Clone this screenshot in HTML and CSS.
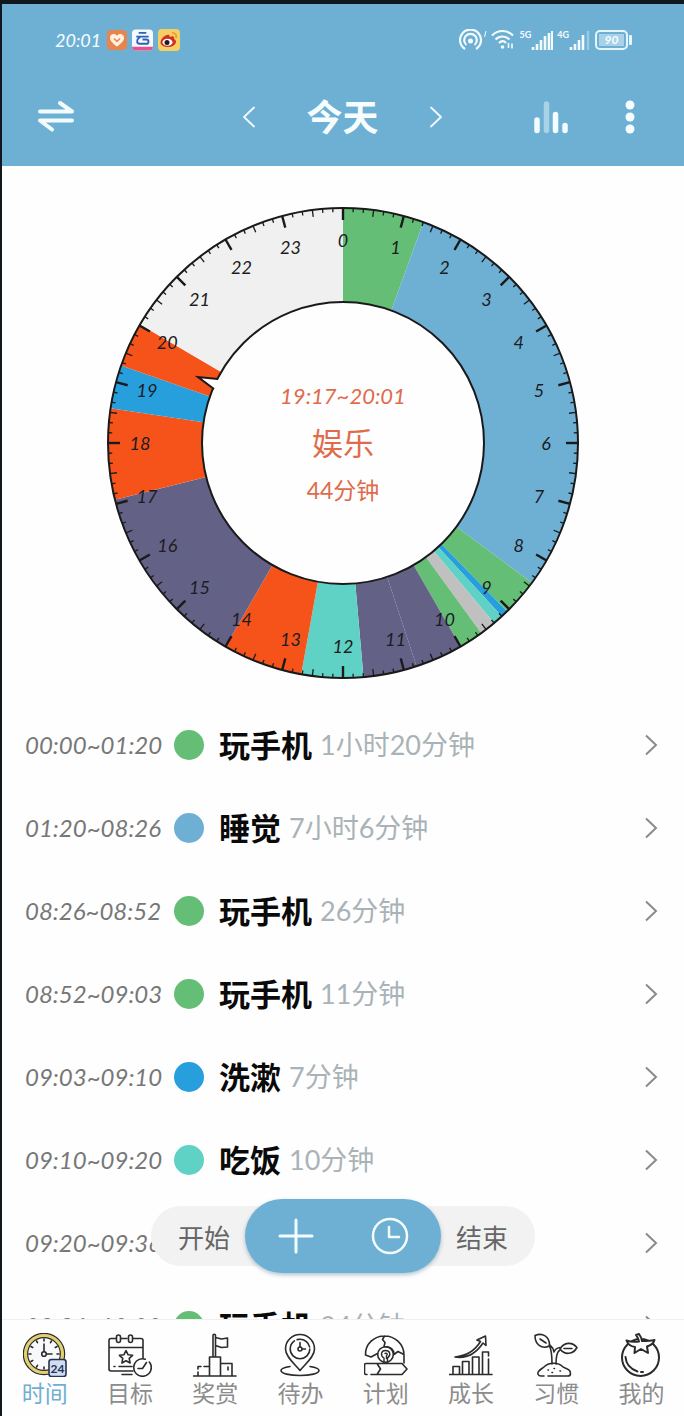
FILE: index.html
```html
<!DOCTYPE html>
<html lang="zh-CN">
<head>
    <meta charset="UTF-8">
    <meta name="viewport" content="width=device-width, initial-scale=1.0">
    <title>今天</title>
    <link rel="stylesheet" href="styles.css">
</head>
<body>
    <div class="app">
        <header class="header">
            <div class="status-bar">
                <span class="status-time">20:01</span>
                <div class="status-apps">
                    <svg width="20" height="20" viewBox="0 0 20 20">
                        <rect width="20" height="20" rx="4" fill="#e8854f"/>
                        <path d="M10 16.500C5 13 3 10.500 3 7.800 3 3.500 8.300 3 10 6c1.700-3 7-2.500 7 1.800 0 2.700-2 5.200-7 8.700z" fill="#fff3df"/>
                        <path d="M7 8.500l3 3 3-3" fill="none" stroke="#e8854f" stroke-width="1.500"/>
                    </svg>
                    <svg width="21" height="22" viewBox="0 0 22 22">
                        <rect width="22" height="22" rx="4" fill="#f4f9ff"/>
                        <path d="M0 18h22a4 4 0 0 1-4 4H4a4 4 0 0 1-4-4z" fill="#e2558c"/>
                        <path d="M7 3.500h8M4.500 7.500h13M8.500 7.500C4 11 5 15 8 15h7c3 0 3-4.500 0-4.500h-4" fill="none" stroke="#2d62b4" stroke-width="2"/>
                    </svg>
                    <svg width="22" height="22" viewBox="0 0 22 22">
                        <rect width="22" height="22" rx="4" fill="#f6cf62"/>
                        <path d="M2.500 13.500c0-4 6-9 8.500-7.500 1 .6.500 2 .5 2 3-1.500 5.500-.5 4.500 2 4 1.500 2 8-6 8-4 0-7.500-2-7.500-4.500z" fill="#d52f25"/>
                        <ellipse cx="9.500" cy="13.300" rx="5" ry="3.500" fill="#fff"/>
                        <circle cx="9" cy="13.500" r="2.500" fill="#1d1d1d"/>
                        <path d="M14 4c3-.5 5 2 4 5" fill="none" stroke="#f09a3a" stroke-width="1.800"/>
                    </svg>
                </div>
                <div class="status-signals">
                    <svg width="28" height="22" viewBox="0 0 28 22" class="line">
                        <path d="M6 20a10.500 10.500 0 1 1 11 0M7.500 16a6.300 6.300 0 1 1 8 0" stroke-width="2.200"/>
                        <circle cx="11.500" cy="12" r="2.500" class="solid"/>
                        <path d="M27 2l-1.500 6" stroke-width="1"/>
                    </svg>
                    <svg width="24" height="22" viewBox="0 0 24 22" class="line">
                        <path d="M1 6.500C7 .5 16 .5 22 6.500M4.500 10.500c4-4 10-4 14 0M8 14c2.500-2.500 5-2.500 7 0" stroke-width="2.200"/>
                        <circle cx="11.500" cy="18" r="1.800" class="solid"/>
                        <path d="M17.500 14v5M21 14.500v5" stroke-width="1.600"/>
                    </svg>
                    <div class="signal">
                        <span>5G</span>
                        <svg width="22" height="20" viewBox="0 0 22 20" class="line">
                            <path d="M2 17v3M6 14v6M10 10v10M14 6v14M18 3v17" stroke-width="2.600"/>
                            <path d="M21 1v19" stroke-width="2"/>
                        </svg>
                    </div>
                    <div class="signal">
                        <span>4G</span>
                        <svg width="22" height="20" viewBox="0 0 22 20" class="line">
                            <path d="M2 17v3M6 14v6M10 10v10M14 5v15" stroke-width="2.600"/>
                            <path d="M19 1v19" stroke-width="2.400" opacity=".35"/>
                        </svg>
                    </div>
                    <div class="battery"><span>90</span></div>
                </div>
            </div>

            <div class="toolbar">
                <button class="tool-button" aria-label="切换">
                    <svg width="38" height="34" viewBox="0 0 38 34" class="line">
                        <path d="M3 11.500h32L23 3M35 20.500H3L15 29.500" stroke-width="4"/>
                    </svg>
                </button>
                <div class="day-picker">
                    <button class="tool-button" aria-label="前一天">
                        <svg width="14" height="22" viewBox="0 0 14 22" class="line"><path d="M12 1.500L2 11l10 9.500" stroke-width="1.800"/></svg>
                    </button>
                    <h1>今天</h1>
                    <button class="tool-button" aria-label="后一天">
                        <svg width="14" height="22" viewBox="0 0 14 22" class="line"><path d="M2 1.500L12 11 2 20.500" stroke-width="1.800"/></svg>
                    </button>
                </div>
                <div class="tool-actions">
                    <button class="tool-button" aria-label="统计">
                        <svg width="34" height="34" viewBox="0 0 34 34" class="line">
                            <path d="M3 20v10.500M21.500 14.500v16M31 25.500v5" stroke-width="5.500"/>
                            <path d="M12.500 4v26.500" stroke-width="5.500" opacity=".45"/>
                        </svg>
                    </button>
                    <button class="tool-button" aria-label="更多">
                        <svg width="10" height="34" viewBox="0 0 10 34" class="solid">
                            <circle cx="5" cy="5" r="4.500"/><circle cx="5" cy="17" r="4.500"/><circle cx="5" cy="29" r="4.500"/>
                        </svg>
                    </button>
                </div>
            </div>
        </header>

        <main class="content">
            <div class="scroll">
                <div class="chart">
                    <svg id="dayChart" viewBox="-237 -237 474 474"></svg>
                    <div class="chart-info">
                        <span class="chart-range">19:17~20:01</span>
                        <span class="chart-name">娱乐</span>
                        <span class="chart-duration">44分钟</span>
                    </div>
                </div>

                <ul class="records">
                    <li><a href="#" class="record">
                        <span class="record-time">00:00~01:20</span><span class="dot green"></span>
                        <span class="record-name">玩手机</span><span class="record-duration">1小时20分钟</span>
                        <svg class="chevron" width="14" height="22" viewBox="0 0 14 22"><path d="M2 1.500L12 11 2 20.500"/></svg>
                    </a></li>
                    <li><a href="#" class="record">
                        <span class="record-time">01:20~08:26</span><span class="dot blue"></span>
                        <span class="record-name">睡觉</span><span class="record-duration">7小时6分钟</span>
                        <svg class="chevron" width="14" height="22" viewBox="0 0 14 22"><path d="M2 1.500L12 11 2 20.500"/></svg>
                    </a></li>
                    <li><a href="#" class="record">
                        <span class="record-time">08:26~08:52</span><span class="dot green"></span>
                        <span class="record-name">玩手机</span><span class="record-duration">26分钟</span>
                        <svg class="chevron" width="14" height="22" viewBox="0 0 14 22"><path d="M2 1.500L12 11 2 20.500"/></svg>
                    </a></li>
                    <li><a href="#" class="record">
                        <span class="record-time">08:52~09:03</span><span class="dot green"></span>
                        <span class="record-name">玩手机</span><span class="record-duration">11分钟</span>
                        <svg class="chevron" width="14" height="22" viewBox="0 0 14 22"><path d="M2 1.500L12 11 2 20.500"/></svg>
                    </a></li>
                    <li><a href="#" class="record">
                        <span class="record-time">09:03~09:10</span><span class="dot azure"></span>
                        <span class="record-name">洗漱</span><span class="record-duration">7分钟</span>
                        <svg class="chevron" width="14" height="22" viewBox="0 0 14 22"><path d="M2 1.500L12 11 2 20.500"/></svg>
                    </a></li>
                    <li><a href="#" class="record">
                        <span class="record-time">09:10~09:20</span><span class="dot teal"></span>
                        <span class="record-name">吃饭</span><span class="record-duration">10分钟</span>
                        <svg class="chevron" width="14" height="22" viewBox="0 0 14 22"><path d="M2 1.500L12 11 2 20.500"/></svg>
                    </a></li>
                    <li><a href="#" class="record">
                        <span class="record-time">09:20~09:36</span><span class="dot gray"></span>
                        <svg class="chevron" width="14" height="22" viewBox="0 0 14 22"><path d="M2 1.500L12 11 2 20.500"/></svg>
                    </a></li>
                    <li><a href="#" class="record">
                        <span class="record-time">09:36~10:00</span><span class="dot green"></span>
                        <span class="record-name">玩手机</span><span class="record-duration">24分钟</span>
                        <svg class="chevron" width="14" height="22" viewBox="0 0 14 22"><path d="M2 1.500L12 11 2 20.500"/></svg>
                    </a></li>
                </ul>
            </div>

            <div class="quick-bar">
                <button class="quick-text">开始</button>
                <div class="quick-main">
                    <button class="tool-button" aria-label="添加">
                        <svg width="36" height="36" viewBox="0 0 36 36" class="line"><path d="M18 2v32M2 18h32" stroke-width="3"/></svg>
                    </button>
                    <button class="tool-button" aria-label="计时">
                        <svg width="38" height="38" viewBox="0 0 38 38" class="line">
                            <circle cx="19" cy="19" r="17" stroke-width="2.500"/>
                            <path d="M18 10v10h10" stroke-width="2.500"/>
                        </svg>
                    </button>
                </div>
                <button class="quick-text">结束</button>
            </div>
        </main>

        <nav class="tab-bar">
            <a href="#" class="tab active">
                <svg viewBox="0 0 44 44">
                    <circle cx="21" cy="21" r="18.500" fill="#f7f9fb" stroke="#2b2b2b" stroke-width="5.500"/>
                    <circle cx="21" cy="21" r="18.500" stroke="#e3cf72" stroke-width="3.200"/>
                    <path d="M21 6v2M21 34v2M6 21h2M13.500 8l1 1.700M28.500 8l-1 1.700M8 13.500l1.700 1M34 13.500l-1.700 1M8 28.500l1.700-1M13.500 34l1-1.700M34 21h2"/>
                    <circle cx="21" cy="21" r="2.300"/>
                    <path d="M21 18.500V11M23.500 21H29"/>
                    <rect x="26" y="26.500" width="17" height="17" rx="2.500" fill="#cfdcf3" stroke="#26344f"/>
                    <text x="34.500" y="39.500" class="tab-badge">24</text>
                </svg>
                <span>时间</span>
            </a>
            <a href="#" class="tab">
                <svg viewBox="0 0 44 44">
                    <path d="M8 5.500H3a2 2 0 0 0-2 2V36a2 2 0 0 0 2 2h22M13 5.500h6M25 5.500h8a2 2 0 0 1 2 2V25M1 14.500h34"/>
                    <rect x="8.500" y="2" width="4" height="7.500" rx="2"/>
                    <rect x="20.500" y="2" width="4" height="7.500" rx="2"/>
                    <path d="M18 17.500l2 4.200 4.600.6-3.400 3.100.9 4.600-4.100-2.300-4.100 2.300.9-4.600-3.400-3.100 4.600-.6z"/>
                    <path d="M6 33.500h1M11 33.500h13M14 41.500h10"/>
                    <circle cx="34.500" cy="34.500" r="8.800" fill="#fff" stroke-dasharray="44 5"/>
                    <path d="M34.500 35.500l4-6M34.500 35.500H30"/>
                </svg>
                <span>目标</span>
            </a>
            <a href="#" class="tab">
                <svg viewBox="0 0 44 44">
                    <path d="M0 43h43M16.500 43V24h11v19M27.500 30.500h11.500V43M5 43v-4M5 36v-2.500h3M11 33.500h5.500M20 24V2.500a1.200 1.200 0 0 1 2.500 0V24M22.500 4.500l6 1.500 6-1v9l-6 .5-6-2M35 34v3"/>
                </svg>
                <span>奖赏</span>
            </a>
            <a href="#" class="tab">
                <svg viewBox="0 0 44 44">
                    <path d="M12 33.500c-5 .7-9 2-9 4 0 3 8.500 5 19 5s19-2 19-5c0-2-4-3.300-9-4"/>
                    <path d="M22 37.500C17 31 7.500 24 7.500 16a14.500 14.500 0 0 1 29 0c0 8-9.500 15-14.500 21.500z" fill="#fff"/>
                    <circle cx="22" cy="16" r="9.800" stroke-dasharray="40 3 16 3"/>
                    <circle cx="22" cy="16" r="2"/>
                    <path d="M22 14V9.500M24 16h3.500"/>
                </svg>
                <span>待办</span>
            </a>
            <a href="#" class="tab">
                <svg viewBox="0 0 44 44">
                    <path d="M1.500 22C1 11 10 3 20.500 3S40 11 40 22v8M20.500 3l-2 3.500 2.500 3-1 4M1.500 22l5.500 2 6.500-3.500M30 21.500l4-3 6 3M20 13.500c6.500 0 10 3 10 8"/>
                    <circle cx="21.500" cy="21.500" r="7.800"/>
                    <path d="M20 29.500V25c-4-2.500-3-7.500 1.500-7.500s6 4.500 2 7.500v4.500M21 20.500c2-1 3 .5 1.500 2v3" stroke-width="1.400"/>
                    <path d="M3 41.500H2a1.500 1.500 0 0 1-1.500-1.500v-8A1.500 1.500 0 0 1 2 30.500h36l5 5.500-5 5.500H7M13 30.500l3.500 5.500-3.500 5.500"/>
                </svg>
                <span>计划</span>
            </a>
            <a href="#" class="tab">
                <svg viewBox="0 0 44 44">
                    <path d="M0 41.500h43M4 41v-7.500h6.500V41M13.500 41V28.500h6.500V41M23.500 41V24h6.500v17M33.500 41V19h6v4M39.500 26v15"/>
                    <path d="M6 24c11-1 20-6.500 25.500-15.500L28 7l8.500-4 .5 9.500-3-2.500C28 19 19 26 6 24z"/>
                </svg>
                <span>成长</span>
            </a>
            <a href="#" class="tab">
                <svg viewBox="0 0 44 44">
                    <path d="M1 2.500C8-.5 16 3 15.500 13 8 16.500 1 12 1 2.500zM6 6l6 4M26 16c4-7 12-7.500 17-1.500-4 7-12 8-17 1.500zM30 15.500h8"/>
                    <path d="M15.500 12c3 2 4 4 4.500 7 1-3 3-4 6-4.500M15.500 13c2 4 2.500 8 2.500 18M26 17c-3 1.500-4 5-4 14"/>
                    <path d="M10 43H7c-3 0-4-2.500-2.500-4.500 2-2.500 4-3 6-5 5-4.500 14-4 18 0 2 2 5 1.500 7 4 1.500 2 1.500 5.500-1.500 5.500H14M14 37h.5M20 35.500h.5M18 39.500h.5M26 38h.5"/>
                </svg>
                <span>习惯</span>
            </a>
            <a href="#" class="tab">
                <svg viewBox="0 0 44 44" class="heavy">
                    <circle cx="21.500" cy="24.500" r="18.500"/>
                    <path d="M6.500 24c.5 7 5 12 12 14.500M22 39h2"/>
                    <path d="M20 8.500c-.5-3-1.500-4.500-3-6.500l3-1c1.500 2 2.500 4 3 7 4 0 8 0 12.500-1-1 3.500-4 5.500-7.500 6.500l1 6.500-7-4-6.500 4 .5-6C12 13.500 9 11.500 7.500 7.500c4 1.500 8 1.500 12.500 1z" fill="#fff"/>
                </svg>
                <span>我的</span>
            </a>
        </nav>
    </div>

    <script src="chart.js"></script>
</body>
</html>
```

FILE: styles.css
```css
:root {
    --blue: #6eb0d4;
    --green: #65be76;
    --azure: #289fdd;
    --teal: #5fd2c5;
    --accent: #df6b4c;
    --gray: #c0c0c0;
    --frame: #10171d;
    --page: #fefefe;
}

* {
    margin: 0;
    padding: 0;
    box-sizing: border-box;
}

body {
    font-family: Lato, "Noto Sans CJK SC", sans-serif;
    background-color: var(--page);
    color: #111;
}

button {
    border: none;
    background: none;
    font: inherit;
    color: inherit;
    cursor: pointer;
}

a {
    color: inherit;
    text-decoration: none;
}

svg {
    display: block;
}

.app {
    display: flex;
    flex-direction: column;
    height: 100vh;
    border-top: 4px solid var(--frame);
    border-left: 2px solid var(--frame);
}

.line {
    fill: none;
    stroke: #f2fcff;
    stroke-linecap: round;
    stroke-linejoin: round;
}

.solid {
    fill: #f6fdff;
    stroke: none;
}

/* Header */
.header {
    background-color: var(--blue);
    color: #f6fdff;
    padding-bottom: 8px;
}

.status-bar {
    display: flex;
    align-items: center;
    height: 72px;
    padding: 0 52px 0 53px;
}

.status-time {
    font-size: 18px;
    font-style: italic;
}

.status-apps {
    display: flex;
    align-items: center;
    gap: 5px;
    margin-left: 6px;
}

.status-signals {
    display: flex;
    align-items: center;
    gap: 4px;
    margin-left: auto;
}

.status-signals .line {
    stroke-linecap: butt;
}

.signal {
    display: flex;
    align-items: flex-start;
}

.signal span {
    font-size: 9px;
    font-weight: 700;
    line-height: 10px;
}

.battery {
    position: relative;
    width: 33px;
    height: 20px;
    margin-right: 4px;
    padding: 2px;
    border: 2px solid #e6f6fd;
    border-radius: 5px;
}

.battery::after {
    content: "";
    position: absolute;
    top: 3px;
    right: -6px;
    width: 3px;
    height: 10px;
    border-radius: 1px;
    background-color: #e6f6fd;
}

.battery span {
    display: block;
    background-color: #a9d2e8;
    font-size: 12px;
    font-style: italic;
    font-weight: 700;
    line-height: 12px;
    text-align: center;
}

.toolbar {
    display: grid;
    grid-template-columns: 1fr auto 1fr;
    align-items: center;
    height: 82px;
    padding: 0 49px 0 35px;
}

.toolbar .tool-button {
    justify-self: start;
}

.day-picker {
    display: flex;
    align-items: center;
    gap: 50px;
    margin-left: 13px;
}

.day-picker h1 {
    font-size: 36px;
    font-weight: 700;
    line-height: 48px;
}

.tool-actions {
    display: flex;
    justify-content: flex-end;
    gap: 57px;
}

/* Content */
.content {
    position: relative;
    flex: 1;
    min-height: 0;
}

.scroll {
    height: 100%;
    overflow: hidden;
}

.chart {
    display: grid;
    place-items: center;
    padding: 40px 0 23px;
}

.chart > * {
    grid-area: 1 / 1;
}

#dayChart {
    width: 100%;
    max-width: 474px;
}

.chart-info {
    display: flex;
    flex-direction: column;
    align-items: center;
    gap: 9px;
    color: var(--accent);
}

.chart-range {
    font-size: 22px;
    font-style: italic;
    line-height: 32px;
}

.chart-name {
    font-size: 31px;
    line-height: 44px;
}

.chart-duration {
    font-size: 23px;
    line-height: 32px;
}

.hour-label {
    font-size: 18px;
    font-style: italic;
    fill: #1c1c22;
    text-anchor: middle;
    dominant-baseline: central;
}

.records {
    list-style: none;
}

.record {
    display: flex;
    align-items: center;
    height: 83px;
    padding: 0 26px 0 23px;
}

.record-time {
    width: 136px;
    font-size: 24px;
    font-style: italic;
    line-height: 44px;
    color: #777;
    white-space: nowrap;
}

.dot {
    width: 30px;
    height: 30px;
    margin: 0 15px 0 13px;
    border-radius: 50%;
}

.dot.green { background-color: var(--green); }
.dot.blue { background-color: var(--blue); }
.dot.azure { background-color: var(--azure); }
.dot.teal { background-color: var(--teal); }
.dot.gray { background-color: var(--gray); }

.record-name {
    font-size: 31px;
    font-weight: 700;
    line-height: 44px;
    color: #0a0a0a;
}

.record-duration {
    margin-left: 8px;
    font-size: 27px;
    line-height: 44px;
    color: #a9b3b7;
}

.chevron {
    margin-left: auto;
    fill: none;
    stroke: #8a8a8a;
    stroke-width: 2;
}

/* Floating start / stop bar */
.quick-bar {
    position: absolute;
    bottom: 53px;
    left: 50%;
    display: flex;
    align-items: center;
    width: 384px;
    height: 60px;
    transform: translateX(-50%);
    border-radius: 30px;
    background-color: #f2f2f2;
}

.quick-text {
    flex: 1;
    height: 60px;
    font-size: 26px;
    color: #666;
}

.quick-text:first-child {
    padding-left: 12px;
}

.quick-text:last-child {
    padding-right: 12px;
}

.quick-main {
    display: flex;
    align-items: center;
    justify-content: center;
    gap: 57px;
    width: 196px;
    height: 74px;
    border-radius: 37px;
    background-color: var(--blue);
    box-shadow: 0 2px 4px rgba(60, 110, 140, 0.4);
}

/* Tabs */
.tab-bar {
    display: grid;
    grid-template-columns: repeat(8, 1fr);
    padding: 13px 0 7px;
    border-top: 1px solid #f0f0f0;
    background-color: var(--page);
}

.tab {
    display: flex;
    flex-direction: column;
    align-items: center;
    color: #8c8c8c;
    font-size: 23px;
    line-height: 32px;
}

.tab.active {
    color: var(--blue);
}

.tab svg {
    width: 44px;
    height: 44px;
    fill: none;
    stroke: #2b2b2b;
    stroke-width: 1.6;
    stroke-linecap: round;
    stroke-linejoin: round;
}

.tab svg.heavy {
    stroke-width: 2;
}

.tab-badge {
    font-size: 12px;
    font-weight: 700;
    fill: #26344f;
    stroke: none;
    text-anchor: middle;
}
```

FILE: chart.js
```js
const SVG_NS = 'http://www.w3.org/2000/svg';
const OUTER = 235;
const INNER = 141;
const LABEL_RADIUS = 203;

const segments = [
    ['00:00', '01:20', '#65be76'],
    ['01:20', '08:26', '#6eb0d4'],
    ['08:26', '09:03', '#65be76'],
    ['09:03', '09:10', '#289fdd'],
    ['09:10', '09:20', '#5fd2c5'],
    ['09:20', '09:36', '#c0c0c0'],
    ['09:36', '10:00', '#65be76'],
    ['10:00', '10:47', '#646187'],
    ['10:47', '11:40', '#646187'],
    ['11:40', '12:41', '#5fd2c5'],
    ['12:41', '14:00', '#f6531b'],
    ['14:00', '17:04', '#646187'],
    ['17:04', '18:34', '#f6531b'],
    ['18:34', '19:17', '#289fdd'],
    ['19:17', '20:01', '#f6531b'],
    ['20:01', '24:00', '#f0f0f0']
];

const chart = document.getElementById('dayChart');

function add(name, attrs, text) {
    const el = document.createElementNS(SVG_NS, name);
    for (const key in attrs) {
        el.setAttribute(key, attrs[key]);
    }
    if (text !== undefined) {
        el.textContent = text;
    }
    chart.appendChild(el);
}

function toMinutes(time) {
    const [h, m] = time.split(':').map(Number);
    return h * 60 + m;
}

// Midnight is at the top, the day runs clockwise
function point(minutes, radius) {
    const angle = minutes / 1440 * Math.PI * 2;
    return [radius * Math.sin(angle), -radius * Math.cos(angle)];
}

segments.forEach(([start, end, color]) => {
    const from = toMinutes(start);
    const to = toMinutes(end);
    const d = `M${point(from, OUTER)} A${OUTER} ${OUTER} 0 0 1 ${point(to, OUTER)}`
        + ` L${point(to, INNER)} A${INNER} ${INNER} 0 0 0 ${point(from, INNER)}Z`;
    add('path', { d, fill: color });
});

add('circle', { r: OUTER, fill: 'none', stroke: '#1a1a1a', 'stroke-width': 2 });
add('circle', { r: INNER, fill: '#fefefe', stroke: '#1a1a1a', 'stroke-width': 2 });

for (let m = 0; m < 1440; m += 10) {
    const isHour = m % 60 === 0;
    const length = isHour ? 12 : m % 30 === 0 ? 7 : 4;
    const [x1, y1] = point(m, OUTER);
    const [x2, y2] = point(m, OUTER - length);
    add('line', { x1, y1, x2, y2, stroke: '#1a1a1a', 'stroke-width': isHour ? 2.4 : 1.3 });
}

for (let h = 0; h < 24; h++) {
    const [x, y] = point(h * 60, LABEL_RADIUS);
    add('text', { x, y, class: 'hour-label' }, h);
}

// Pointer on the selected segment
add('path', { d: 'M-122 -63L-145 -66L-128 -54L-120 -54Z', fill: '#fefefe' });
add('path', { d: 'M-125 -64L-145 -66L-129 -54', fill: 'none', stroke: '#1a1a1a', 'stroke-width': 2 });
```
